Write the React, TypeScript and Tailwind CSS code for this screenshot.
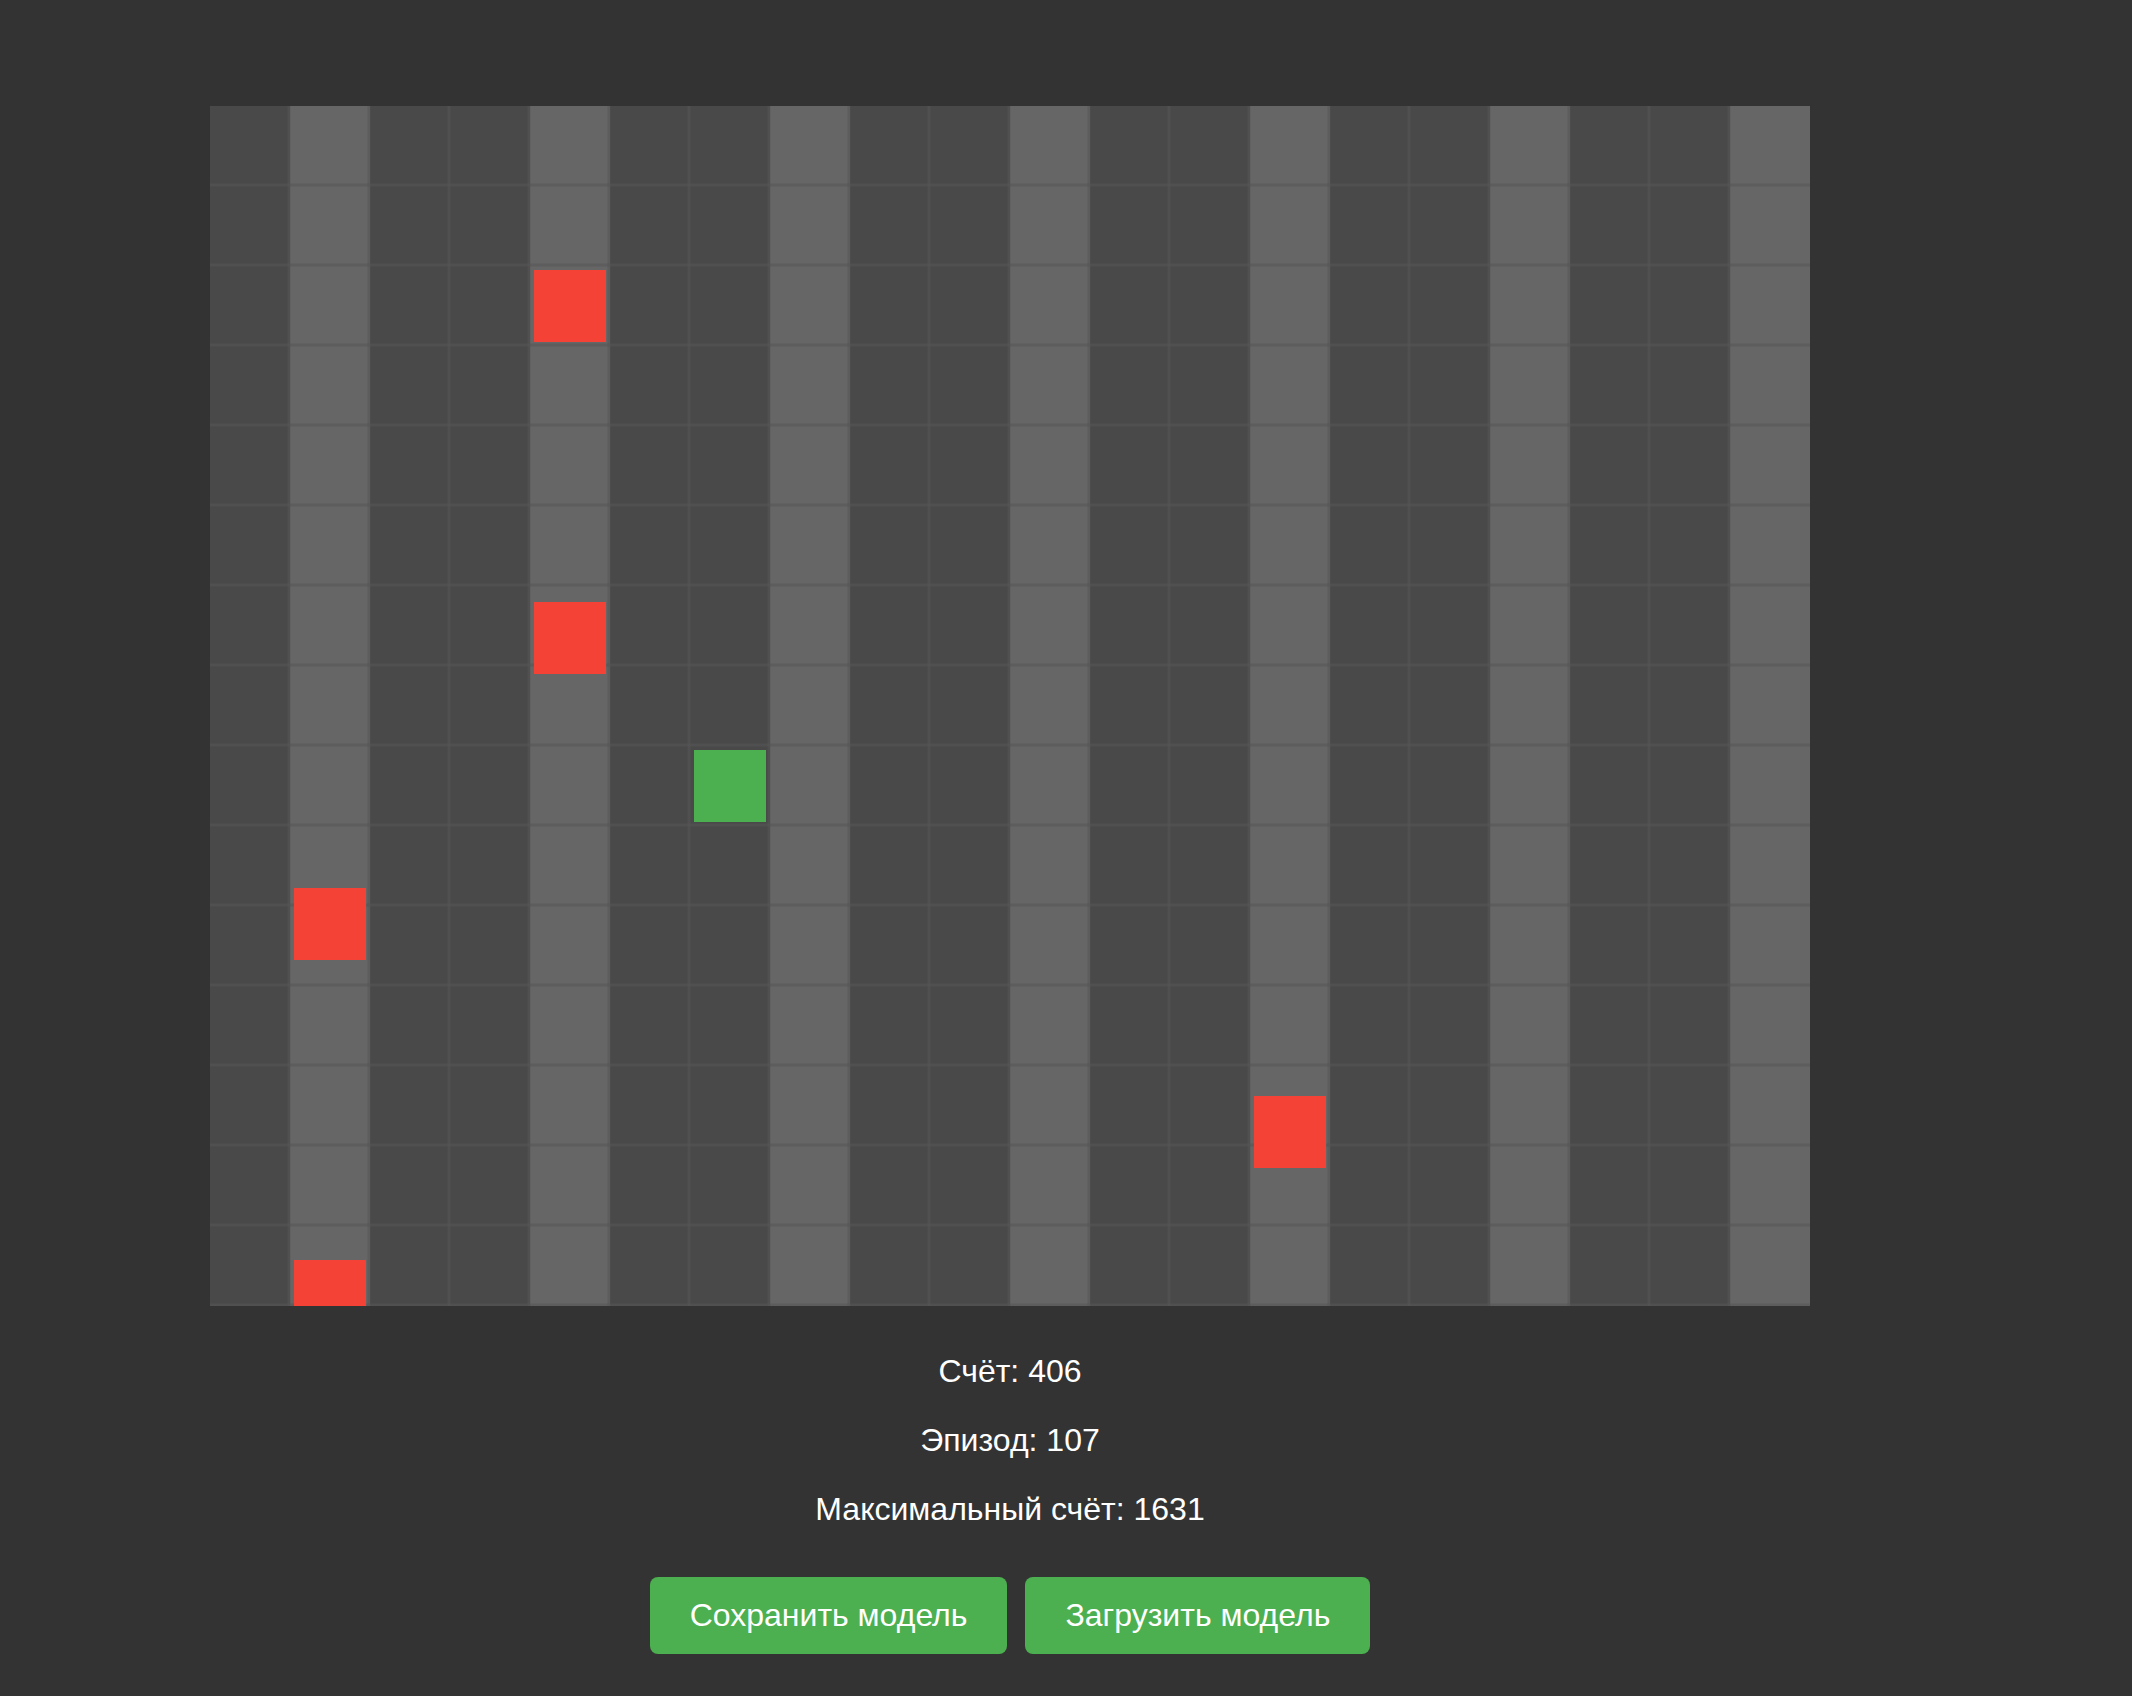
import React from 'react';

const COLS = 20;
const ROWS = 15;
const CELL = 80;

// falling obstacles, y is free (they move between rows)
const obstacles = [
  { col: 4, y: 164 },
  { col: 4, y: 496 },
  { col: 1, y: 782 },
  { col: 13, y: 990 },
  { col: 1, y: 1154 },
];

const player = { col: 6, row: 8 };

function Board() {
  const cells = [];
  for (let r = 0; r < ROWS; r++) {
    for (let c = 0; c < COLS; c++) {
      cells.push(
        <rect
          key={`${r}-${c}`}
          x={c * CELL}
          y={r * CELL}
          width={CELL}
          height={CELL}
          fill={c % 3 === 1 ? '#666666' : '#494949'}
        />
      );
    }
  }

  const lines = [];
  for (let c = 1; c < COLS; c++) {
    lines.push(
      <rect key={`v${c}`} x={c * CELL - 2.5} y={0} width={3} height={ROWS * CELL} fill="#555555" opacity={0.55} />
    );
  }
  for (let r = 1; r <= ROWS; r++) {
    lines.push(
      <rect key={`h${r}`} x={0} y={r * CELL - 2.5} width={COLS * CELL} height={3} fill="#555555" opacity={0.55} />
    );
  }

  return (
    <svg width={1600} height={1200} viewBox="0 0 1600 1200" className="block">
      {cells}
      {lines}
      {obstacles.map((o, i) => (
        <rect key={i} x={o.col * CELL + 4} y={o.y} width={72} height={72} fill="#f44336" />
      ))}
      <rect x={player.col * CELL + 4} y={player.row * CELL + 4} width={72} height={72} fill="#4caf50" />
    </svg>
  );
}

export default function App() {
  return (
    <div className="min-h-screen w-full bg-[#333333] text-white font-['Liberation_Sans',Arial,sans-serif]">
      <div className="w-[2020px] flex flex-col items-center pt-[106px]">
        <Board />

        <div className="mt-[47px] flex flex-col items-center gap-[32px] text-[32px] leading-[37px]">
          <p>Счёт: 406</p>
          <p>Эпизод: 107</p>
          <p>Максимальный счёт: 1631</p>
        </div>

        <div className="mt-[49px] flex gap-[18px]">
          <button className="bg-[#4caf50] text-white text-[32px] leading-[37px] px-[40px] py-[20px] rounded-[8px]">
            Сохранить модель
          </button>
          <button className="bg-[#4caf50] text-white text-[32px] leading-[37px] px-[40px] py-[20px] rounded-[8px]">
            Загрузить модель
          </button>
        </div>
      </div>
    </div>
  );
}
